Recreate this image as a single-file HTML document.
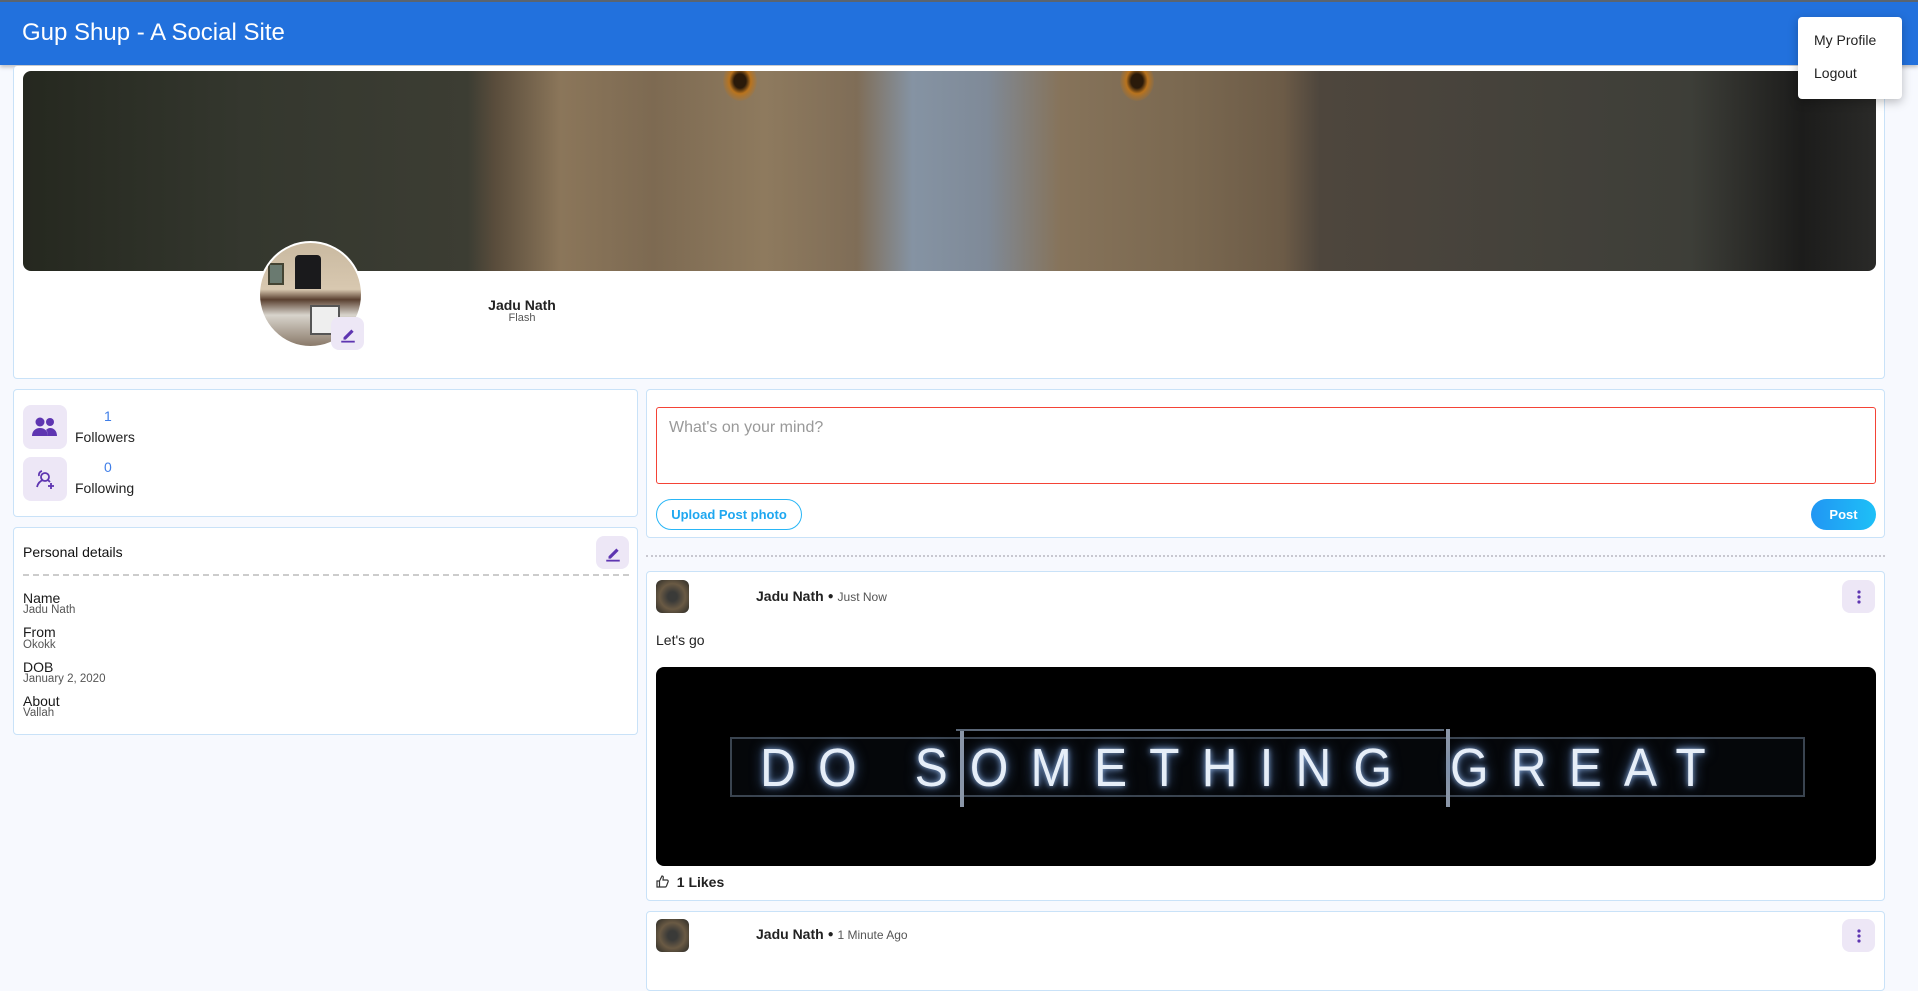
<!DOCTYPE html>
<html><head><meta charset="utf-8"><style>
*{box-sizing:border-box;margin:0;padding:0}
body{width:1918px;height:970px;overflow:hidden;background:#f7f9fe;font-family:"Liberation Sans",sans-serif;color:#222;position:relative}
.a{position:absolute}
.card{position:absolute;background:#fff;border:1px solid #c9e2f8;border-radius:4px}
.ib{position:absolute;background:#ede7f6;border-radius:8px;display:flex;align-items:center;justify-content:center}
.lab{position:absolute;font-size:14px;color:#1a1a1a}
.val{position:absolute;font-size:11.5px;color:#555}
</style></head><body>
<div class="a" style="left:0;top:0;width:1918px;height:65px;background:#2271dd;border-top:2px solid #5a6470;box-shadow:0 2px 4px rgba(0,0,0,.25)"></div>
<div class="a" style="left:22px;top:19px;font-size:24px;color:#fff">Gup Shup - A Social Site</div>

<div class="card" style="left:13px;top:66px;width:1872px;height:313px;border-top:none"></div>
<div class="a" style="left:23px;top:71px;width:1853px;height:200px;border-radius:8px;overflow:hidden;background:linear-gradient(90deg,#25281f 0%,#34372e 12%,#3c3d33 24%,#5a4d3c 25.5%,#8b765a 29%,#7d6a52 34%,#8e7a5e 40%,#7f6d57 45%,#8593a3 48%,#7f8a98 52%,#86735a 56%,#7a6850 63%,#6c5b47 68%,#4e463d 70%,#45423b 80%,#3d3e38 90%,#1c1c1b 96%,#2a2a28 100%)">
<div class="a" style="left:700px;top:-10px;width:34px;height:40px;border-radius:50%;background:radial-gradient(#2a1a0a 25%,#b8731e 45%,rgba(120,80,40,0) 75%)"></div>
<div class="a" style="left:1097px;top:-10px;width:34px;height:40px;border-radius:50%;background:radial-gradient(#2a1a0a 25%,#b8731e 45%,rgba(120,80,40,0) 75%)"></div>
</div>
<div class="a" style="left:258px;top:241px;width:105px;height:107px;border-radius:50%;border:2px solid #fff;overflow:hidden;background:linear-gradient(180deg,#c9b9a0 0%,#d8c8b0 45%,#5a4030 55%,#d8d4cc 70%,#8a7a6a 100%)">
<div class="a" style="left:35px;top:12px;width:26px;height:34px;background:#1a1a1c;border-radius:4px 4px 0 0"></div>
<div class="a" style="left:8px;top:20px;width:16px;height:22px;border:2px solid #443;background:#6a7a70"></div>
<div class="a" style="left:50px;top:62px;width:30px;height:30px;background:#eee;border:2px solid #555"></div>
</div>
<div class="ib" style="left:331px;top:317px;width:33px;height:33px"><svg width="18" height="18" viewBox="0 0 16 16"><path d="M4 11l7-7 2 2-7 7H4z" fill="#5e35b1"/><rect x="2" y="14" width="12" height="1.6" fill="#5e35b1"/></svg></div>
<div class="a" style="left:472px;top:297px;width:100px;text-align:center;font-size:14px;font-weight:bold;color:#222">Jadu Nath</div>
<div class="a" style="left:472px;top:312px;width:100px;text-align:center;font-size:11px;color:#555">Flash</div>

<div class="card" style="left:13px;top:389px;width:625px;height:128px"></div>
<div class="ib" style="left:23px;top:405px;width:44px;height:44px"><svg width="26" height="22" viewBox="0 0 26 22"><circle cx="8" cy="6" r="4.5" fill="#5e35b1"/><circle cx="18" cy="6" r="4" fill="#5e35b1"/><path d="M0 20c0-5 3.5-8 8-8s8 3 8 8z" fill="#5e35b1"/><path d="M16 20c0-3-1-5-2-6 1-1 2.5-2 4-2 4 0 7 3 7 8z" fill="#5e35b1"/></svg></div>
<div class="ib" style="left:23px;top:457px;width:44px;height:44px"><svg width="24" height="24" viewBox="0 0 24 24" fill="none" stroke="#5e35b1" stroke-width="1.8"><circle cx="12" cy="10" r="4"/><path d="M9 4a4 4 0 0 0-3 5M4 20c1-4 3-6 6-7M15 13l2 2"/><path d="M18 16v6M15 19h6"/></svg></div>
<div class="a" style="left:104px;top:408px;font-size:14px;color:#3f7ee8">1</div>
<div class="a" style="left:75px;top:429px;font-size:14px;color:#222">Followers</div>
<div class="a" style="left:104px;top:459px;font-size:14px;color:#3f7ee8">0</div>
<div class="a" style="left:75px;top:480px;font-size:14px;color:#222">Following</div>

<div class="card" style="left:13px;top:527px;width:625px;height:208px"></div>
<div class="a" style="left:23px;top:544px;font-size:14px;color:#111">Personal details</div>
<div class="ib" style="left:596px;top:536px;width:33px;height:33px"><svg width="18" height="18" viewBox="0 0 16 16"><path d="M4 11l7-7 2 2-7 7H4z" fill="#5e35b1"/><rect x="2" y="14" width="12" height="1.6" fill="#5e35b1"/></svg></div>
<div class="a" style="left:23px;top:574px;width:606px;border-top:2px dashed #ccc"></div>
<div class="lab" style="left:23px;top:590px">Name</div><div class="val" style="left:23px;top:604px">Jadu Nath</div>
<div class="lab" style="left:23px;top:624px">From</div><div class="val" style="left:23px;top:639px">Okokk</div>
<div class="lab" style="left:23px;top:659px">DOB</div><div class="val" style="left:23px;top:673px">January 2, 2020</div>
<div class="lab" style="left:23px;top:693px">About</div><div class="val" style="left:23px;top:707px">Vallah</div>

<div class="card" style="left:646px;top:389px;width:1239px;height:149px"></div>
<div class="a" style="left:656px;top:407px;width:1220px;height:77px;border:1px solid #f44336;border-radius:3px"></div>
<div class="a" style="left:669px;top:419px;font-size:16px;color:#999">What's on your mind?</div>
<div class="a" style="left:656px;top:499px;width:146px;height:31px;border:1px solid #29b6f6;border-radius:16px;color:#1ea7f0;font-size:13px;font-weight:bold;text-align:center;line-height:29px">Upload Post photo</div>
<div class="a" style="left:1811px;top:499px;width:65px;height:31px;border-radius:16px;background:linear-gradient(90deg,#2196f3,#1ec0f7);color:#fff;font-size:13px;font-weight:bold;text-align:center;line-height:31px">Post</div>
<div class="a" style="left:646px;top:555px;width:1239px;border-top:2px dotted #c8c8d0"></div>

<div class="card" style="left:646px;top:571px;width:1239px;height:330px"></div>
<div class="a" style="left:656px;top:580px;width:33px;height:33px;border-radius:6px;background:radial-gradient(#3a3a38 20%,#6a5a44 55%,#2a2a26 100%)"></div>
<div class="a" style="left:756px;top:588px;font-size:14px;font-weight:bold;color:#222">Jadu Nath <span style="font-size:10px;vertical-align:2px">●</span> <span style="font-size:12px;font-weight:normal;color:#555">Just Now</span></div>
<div class="ib" style="left:1842px;top:580px;width:33px;height:33px"><svg width="4" height="14"><circle cx="2" cy="2" r="1.6" fill="#5e35b1"/><circle cx="2" cy="7" r="1.6" fill="#5e35b1"/><circle cx="2" cy="12" r="1.6" fill="#5e35b1"/></svg></div>
<div class="a" style="left:656px;top:632px;font-size:14px;color:#222">Let's go</div>
<div class="a" style="left:656px;top:667px;width:1220px;height:199px;background:#000;border-radius:8px;overflow:hidden">
<div class="a" style="left:74px;top:70px;width:1075px;height:60px;border:2px solid #3a4450;background:#05070a"></div>
<div class="a" style="left:304px;top:62px;width:4px;height:78px;background:#8a96a8"></div>
<div class="a" style="left:790px;top:62px;width:4px;height:78px;background:#8a96a8"></div>
<div class="a" style="left:300px;top:62px;width:488px;border-top:2px solid #5a6676"></div>
<div class="a" style="left:104px;top:70px;font-size:54px;letter-spacing:24px;color:#e6eef8;font-weight:normal;text-shadow:0 0 6px #8fb0e0,0 0 14px #4a6fa8;white-space:nowrap;transform:scaleX(.92);transform-origin:left">DO SOMETHING GREAT</div>
</div>
<div class="a" style="left:656px;top:874px;font-size:14px;font-weight:bold;color:#222"><svg width="13" height="13" viewBox="0 0 13 13" style="vertical-align:-1px" fill="none" stroke="#333" stroke-width="1.2"><path d="M1 6h2.5v6H1zM3.5 6l2.5-5c1.2 0 1.5 1 1.2 2L7 5h4c1 0 1.5 1 1 2l-1.5 4c-.3.7-.8 1-1.5 1H3.5"/></svg>&nbsp; 1 Likes</div>

<div class="card" style="left:646px;top:911px;width:1239px;height:80px"></div>
<div class="a" style="left:656px;top:919px;width:33px;height:33px;border-radius:6px;background:radial-gradient(#3a3a38 20%,#6a5a44 55%,#2a2a26 100%)"></div>
<div class="a" style="left:756px;top:926px;font-size:14px;font-weight:bold;color:#222">Jadu Nath <span style="font-size:10px;vertical-align:2px">●</span> <span style="font-size:12px;font-weight:normal;color:#555">1 Minute Ago</span></div>
<div class="ib" style="left:1842px;top:919px;width:33px;height:33px"><svg width="4" height="14"><circle cx="2" cy="2" r="1.6" fill="#5e35b1"/><circle cx="2" cy="7" r="1.6" fill="#5e35b1"/><circle cx="2" cy="12" r="1.6" fill="#5e35b1"/></svg></div>

<div class="a" style="left:1798px;top:17px;width:104px;height:82px;background:#fff;border-radius:4px;box-shadow:0 3px 10px rgba(0,0,0,.25)">
<div class="a" style="left:16px;top:15px;font-size:14px;color:#222;white-space:nowrap">My Profile</div>
<div class="a" style="left:16px;top:48px;font-size:14px;color:#222">Logout</div>
</div>
</body></html>
